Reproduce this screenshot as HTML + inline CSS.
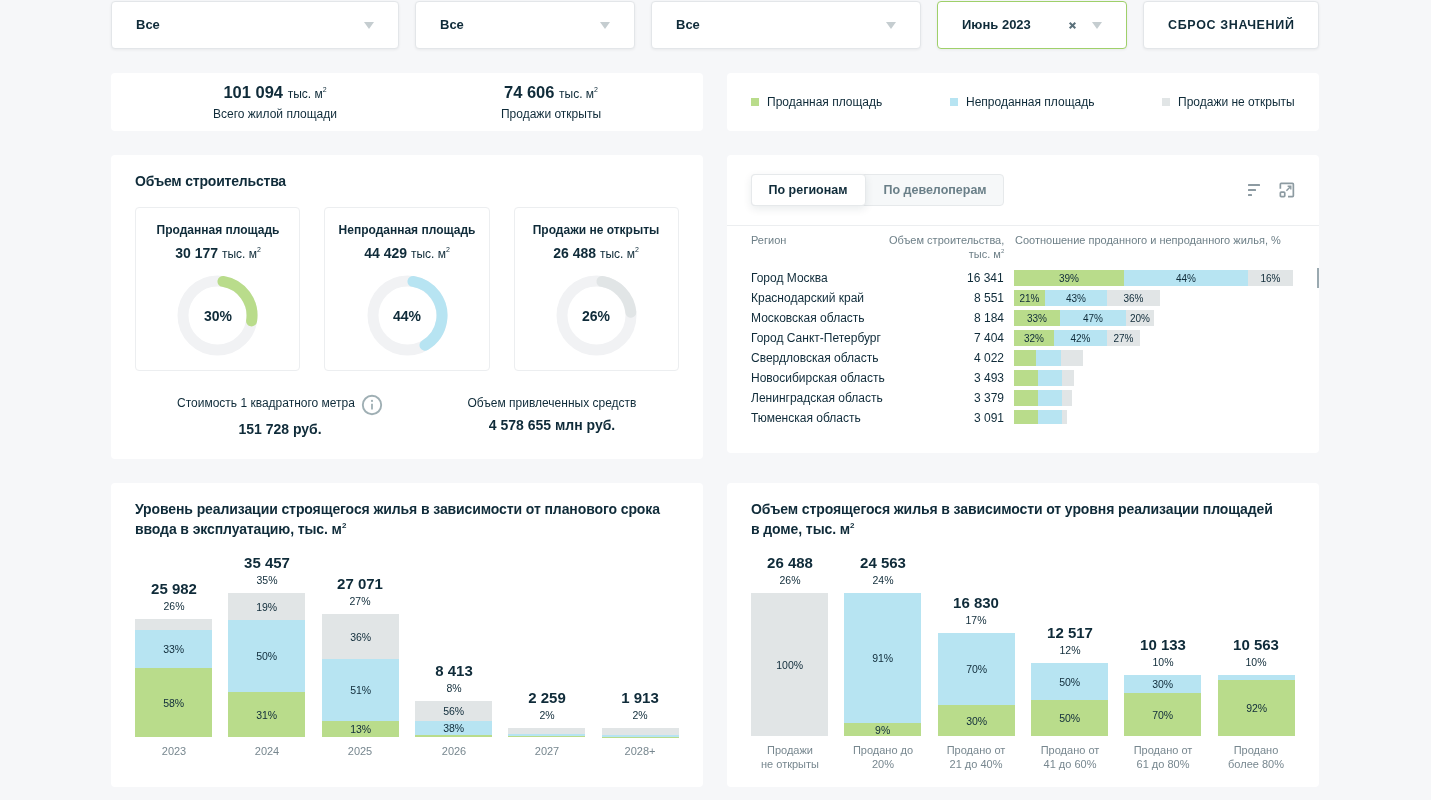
<!DOCTYPE html>
<html lang="ru">
<head>
<meta charset="utf-8">
<title>Dashboard</title>
<style>
*{box-sizing:border-box;margin:0;padding:0}
html,body{width:1431px;height:800px;overflow:hidden}
body{background:#f6f7f9;font-family:"Liberation Sans",sans-serif;color:#0f2b39;position:relative}
.abs{position:absolute}
.card{position:absolute;background:#fff;border-radius:4px}
.sel{position:absolute;top:1px;height:48px;background:#fff;border:1px solid #e3e6e9;border-radius:4px;box-shadow:0 1px 3px rgba(0,0,0,.06)}
.sel .t{will-change:transform;position:absolute;left:24px;top:15px;font-size:13px;font-weight:700;line-height:16px;white-space:nowrap}
.sel .ar{position:absolute;right:24px;top:20px;width:0;height:0;border-left:5px solid transparent;border-right:5px solid transparent;border-top:7px solid #c5cdd0}
.txt{position:absolute;white-space:nowrap;line-height:1;will-change:transform}
.c{transform:translateX(-50%);text-align:center}
.g{background:#b9dc8b}.b{background:#b7e4f2}.y{background:#e1e5e6}
.seg{will-change:transform;position:absolute;display:flex;align-items:center;justify-content:center;font-size:10.5px;color:#0f2b39;white-space:nowrap}
</style>
</head>
<body>

<!-- top filters -->
<div class="sel" style="left:111px;width:288px"><span class="t">Все</span><i class="ar"></i></div>
<div class="sel" style="left:415px;width:220px"><span class="t">Все</span><i class="ar"></i></div>
<div class="sel" style="left:651px;width:270px"><span class="t">Все</span><i class="ar"></i></div>
<div class="sel" style="left:937px;width:190px;border-color:#9fd06a"><span class="t">Июнь 2023</span><svg class="abs" style="left:130px;top:19px" width="9" height="9" viewBox="0 0 9 9"><path d="M1.7 1.7L7.3 7.3M7.3 1.7L1.7 7.3" stroke="#5b717b" stroke-width="2" fill="none"/></svg><i class="ar"></i></div>
<div class="sel" style="left:1143px;width:176px"><span class="t" style="letter-spacing:0.65px;font-size:12.5px">СБРОС ЗНАЧЕНИЙ</span></div>

<!-- stats card -->
<div class="card" style="left:111px;top:73px;width:592px;height:58px">
  <div class="txt c" id="s1" style="left:164px;top:11px;font-size:16.5px;font-weight:700">101 094 <span style="font-size:12px;font-weight:400">тыс. м<sup style="font-size:7px;vertical-align:6px;line-height:0">2</sup></span></div>
  <div class="txt c" id="s1l" style="left:164px;top:35px;font-size:12px">Всего жилой площади</div>
  <div class="txt c" id="s2" style="left:440px;top:11px;font-size:16.5px;font-weight:700">74 606 <span style="font-size:12px;font-weight:400">тыс. м<sup style="font-size:7px;vertical-align:6px;line-height:0">2</sup></span></div>
  <div class="txt c" id="s2l" style="left:440px;top:35px;font-size:12px">Продажи открыты</div>
</div>
<!-- legend card -->
<div class="card" style="left:727px;top:73px;width:592px;height:58px">
  <i class="abs g" style="left:24px;top:25px;width:8px;height:8px"></i><div class="txt" id="l1" style="left:40px;top:23px;font-size:12px">Проданная площадь</div>
  <i class="abs b" style="left:223px;top:25px;width:8px;height:8px"></i><div class="txt" id="l2" style="left:239px;top:23px;font-size:12px">Непроданная площадь</div>
  <i class="abs y" style="left:435px;top:25px;width:8px;height:8px"></i><div class="txt" id="l3" style="left:451px;top:23px;font-size:12px">Продажи не открыты</div>
</div>

<!-- volume card -->
<div class="card" style="left:111px;top:155px;width:592px;height:304px">
  <div class="txt" id="vt" style="left:24px;top:19px;font-size:14px;letter-spacing:-0.2px;font-weight:700">Объем строительства</div>
  <div class="abs" style="left:24px;top:52px;width:165.33px;height:164px;border:1px solid #eceef0;border-radius:4px">
    <div class="txt c" id="d1t" style="left:81.67px;top:16px;font-size:12px;font-weight:700">Проданная площадь</div>
    <div class="txt c" id="d1v" style="left:81.67px;top:38px;font-size:14px;font-weight:700">30 177 <span style="font-size:12px;font-weight:400">тыс. м<sup style="font-size:7px;vertical-align:6px;line-height:0">2</sup></span></div>
    <svg class="abs" style="left:41.3px;top:67.1px" width="81" height="81" viewBox="0 0 81 81"><circle cx="40.5" cy="40.5" r="34.5" fill="none" stroke="#f1f2f4" stroke-width="11"/><circle cx="40.5" cy="40.5" r="34.5" fill="none" stroke="#b9dc8b" stroke-width="11" stroke-linecap="round" stroke-dasharray="54.03 216.77" transform="rotate(-80.87 40.5 40.5)"/></svg>
    <div class="txt c" style="left:81.67px;top:101px;font-size:14px;font-weight:700">30%</div>
  </div>
  <div class="abs" style="left:213.33px;top:52px;width:165.33px;height:164px;border:1px solid #eceef0;border-radius:4px">
    <div class="txt c" id="d2t" style="left:81.67px;top:16px;font-size:12px;font-weight:700">Непроданная площадь</div>
    <div class="txt c" id="d2v" style="left:81.67px;top:38px;font-size:14px;font-weight:700">44 429 <span style="font-size:12px;font-weight:400">тыс. м<sup style="font-size:7px;vertical-align:6px;line-height:0">2</sup></span></div>
    <svg class="abs" style="left:41.3px;top:67.1px" width="81" height="81" viewBox="0 0 81 81"><circle cx="40.5" cy="40.5" r="34.5" fill="none" stroke="#f1f2f4" stroke-width="11"/><circle cx="40.5" cy="40.5" r="34.5" fill="none" stroke="#b7e4f2" stroke-width="11" stroke-linecap="round" stroke-dasharray="84.38 216.77" transform="rotate(-80.87 40.5 40.5)"/></svg>
    <div class="txt c" style="left:81.67px;top:101px;font-size:14px;font-weight:700">44%</div>
  </div>
  <div class="abs" style="left:402.67px;top:52px;width:165.33px;height:164px;border:1px solid #eceef0;border-radius:4px">
    <div class="txt c" id="d3t" style="left:81.67px;top:16px;font-size:12px;font-weight:700">Продажи не открыты</div>
    <div class="txt c" id="d3v" style="left:81.67px;top:38px;font-size:14px;font-weight:700">26 488 <span style="font-size:12px;font-weight:400">тыс. м<sup style="font-size:7px;vertical-align:6px;line-height:0">2</sup></span></div>
    <svg class="abs" style="left:41.3px;top:67.1px" width="81" height="81" viewBox="0 0 81 81"><circle cx="40.5" cy="40.5" r="34.5" fill="none" stroke="#f1f2f4" stroke-width="11"/><circle cx="40.5" cy="40.5" r="34.5" fill="none" stroke="#e1e5e6" stroke-width="11" stroke-linecap="round" stroke-dasharray="45.36 216.77" transform="rotate(-80.87 40.5 40.5)"/></svg>
    <div class="txt c" style="left:81.67px;top:101px;font-size:14px;font-weight:700">26%</div>
  </div>
  <div class="txt" id="c1" style="left:66px;top:242px;font-size:12px">Стоимость 1 квадратного метра</div>
  <svg class="abs" style="left:250px;top:239px" width="22" height="22" viewBox="0 0 22 22"><circle cx="11" cy="11" r="9.2" fill="none" stroke="#9fafb4" stroke-width="1.9"/><circle cx="11" cy="6.9" r="1.1" fill="#9fafb4"/><path d="M11 9.7V15.6" stroke="#9fafb4" stroke-width="1.8"/></svg>
  <div class="txt c" id="c1v" style="left:169px;top:267px;font-size:14px;font-weight:700">151 728 руб.</div>
  <div class="txt c" id="c2" style="left:441px;top:242px;font-size:12px">Объем привлеченных средств</div>
  <div class="txt c" id="c2v" style="left:441px;top:263px;font-size:14px;font-weight:700">4 578 655 млн руб.</div>
</div>
<!-- regions card -->
<div class="card" style="left:727px;top:155px;width:592px;height:298px">
  <div class="abs" style="left:24px;top:19px;width:253px;height:32px;background:#f6f8f9;border:1px solid #e6e9eb;border-radius:4px"></div>
  <div class="abs" style="left:24px;top:19px;width:115px;height:32px;background:#fff;border:1px solid #e6e9eb;border-radius:4px;box-shadow:0 3px 8px rgba(16,41,58,.09)"></div>
  <div class="txt c" id="tb1" style="left:81px;top:29px;font-size:12.5px;font-weight:700">По регионам</div>
  <div class="txt c" id="tb2" style="left:208px;top:29px;font-size:12.5px;font-weight:700;color:#6a7f88">По девелоперам</div>
  <svg class="abs" style="left:521px;top:29px" width="12" height="12" viewBox="0 0 12 12"><rect x="0" y="0" width="12" height="2" rx="0.5" fill="#8d9ba2"/><rect x="0" y="5" width="8" height="2" rx="0.5" fill="#8d9ba2"/><rect x="0" y="10" width="4" height="2" rx="0.5" fill="#8d9ba2"/></svg>
  <svg class="abs" style="left:552px;top:27px" width="16" height="16" viewBox="0 0 16 16" fill="none" stroke="#8d9ba2" stroke-width="1.7"><path d="M1.35 6.7V2.3Q1.35 1.45 2.2 1.45H13.5Q14.35 1.45 14.35 2.3V13.7Q14.35 14.55 13.5 14.55H9"/><rect x="1.35" y="10.2" width="4.4" height="4.4" rx="0.8"/><path d="M7.4 8.7L11.4 4.7" stroke-width="1.5"/><path d="M8.6 4.3H11.8V7.5" stroke-width="1.4"/></svg>
  <div class="abs" style="left:0;top:70px;width:592px;height:1px;background:#eceef0"></div>
  <div class="txt" id="h1" style="left:24px;top:80px;font-size:11px;color:#6d7f87">Регион</div>
  <div class="txt" id="h2" style="right:315px;top:78px;font-size:11px;color:#6d7f87;text-align:right;line-height:14px">Объем строительства,<br>тыс. м<sup style="font-size:6px;vertical-align:5px;line-height:0">2</sup></div>
  <div class="txt" id="h3" style="left:288px;top:80px;font-size:11px;color:#6d7f87">Соотношение проданного и непроданного жилья, %</div>
  <div class="abs" style="left:590px;top:113px;width:2px;height:20px;background:#9aa9b0"></div>

  <div class="txt" id="r0" style="left:24px;top:117px;font-size:12px">Город Москва</div><div class="txt" style="right:315px;top:117px;font-size:12px">16 341</div>
  <div class="seg g" style="left:287px;top:115px;width:110px;height:16px;font-size:10px">39%</div>
  <div class="seg b" style="left:397px;top:115px;width:124px;height:16px;font-size:10px">44%</div>
  <div class="seg y" style="left:521px;top:115px;width:45px;height:16px;font-size:10px">16%</div>
  <div class="txt" id="r1" style="left:24px;top:137px;font-size:12px">Краснодарский край</div><div class="txt" style="right:315px;top:137px;font-size:12px">8 551</div>
  <div class="seg g" style="left:287px;top:135px;width:31px;height:16px;font-size:10px">21%</div>
  <div class="seg b" style="left:318px;top:135px;width:62px;height:16px;font-size:10px">43%</div>
  <div class="seg y" style="left:380px;top:135px;width:53px;height:16px;font-size:10px">36%</div>
  <div class="txt" id="r2" style="left:24px;top:157px;font-size:12px">Московская область</div><div class="txt" style="right:315px;top:157px;font-size:12px">8 184</div>
  <div class="seg g" style="left:287px;top:155px;width:46px;height:16px;font-size:10px">33%</div>
  <div class="seg b" style="left:333px;top:155px;width:66px;height:16px;font-size:10px">47%</div>
  <div class="seg y" style="left:399px;top:155px;width:28px;height:16px;font-size:10px">20%</div>
  <div class="txt" id="r3" style="left:24px;top:177px;font-size:12px">Город Санкт-Петербург</div><div class="txt" style="right:315px;top:177px;font-size:12px">7 404</div>
  <div class="seg g" style="left:287px;top:175px;width:40px;height:16px;font-size:10px">32%</div>
  <div class="seg b" style="left:327px;top:175px;width:53px;height:16px;font-size:10px">42%</div>
  <div class="seg y" style="left:380px;top:175px;width:33px;height:16px;font-size:10px">27%</div>
  <div class="txt" id="r4" style="left:24px;top:197px;font-size:12px">Свердловская область</div><div class="txt" style="right:315px;top:197px;font-size:12px">4 022</div>
  <div class="seg g" style="left:287px;top:195px;width:22px;height:16px;font-size:10px"></div>
  <div class="seg b" style="left:309px;top:195px;width:25px;height:16px;font-size:10px"></div>
  <div class="seg y" style="left:334px;top:195px;width:22px;height:16px;font-size:10px"></div>
  <div class="txt" id="r5" style="left:24px;top:217px;font-size:12px">Новосибирская область</div><div class="txt" style="right:315px;top:217px;font-size:12px">3 493</div>
  <div class="seg g" style="left:287px;top:215px;width:24px;height:16px;font-size:10px"></div>
  <div class="seg b" style="left:311px;top:215px;width:24px;height:16px;font-size:10px"></div>
  <div class="seg y" style="left:335px;top:215px;width:12px;height:16px;font-size:10px"></div>
  <div class="txt" id="r6" style="left:24px;top:237px;font-size:12px">Ленинградская область</div><div class="txt" style="right:315px;top:237px;font-size:12px">3 379</div>
  <div class="seg g" style="left:287px;top:235px;width:24px;height:16px;font-size:10px"></div>
  <div class="seg b" style="left:311px;top:235px;width:24px;height:16px;font-size:10px"></div>
  <div class="seg y" style="left:335px;top:235px;width:10px;height:16px;font-size:10px"></div>
  <div class="txt" id="r7" style="left:24px;top:257px;font-size:12px">Тюменская область</div><div class="txt" style="right:315px;top:257px;font-size:12px">3 091</div>
  <div class="seg g" style="left:287px;top:255px;width:24px;height:14px;font-size:10px"></div>
  <div class="seg b" style="left:311px;top:255px;width:24px;height:14px;font-size:10px"></div>
  <div class="seg y" style="left:335px;top:255px;width:5px;height:14px;font-size:10px"></div>
</div>

<!-- bottom left -->
<div class="card" style="left:111px;top:483px;width:592px;height:304px">
  <div class="txt" id="blt" style="left:24px;top:16px;font-size:14px;font-weight:700;line-height:20px;letter-spacing:-0.1px">Уровень реализации строящегося жилья в зависимости от планового срока<br>ввода в эксплуатацию, тыс. м<sup style="font-size:8px;vertical-align:6px;line-height:0">2</sup></div>
  <div class="txt c" style="left:62.7px;top:98px;font-size:15px;font-weight:700">25 982</div><div class="txt c" style="left:62.7px;top:118px;font-size:10.5px">26%</div>
  <div class="seg y" style="left:24.00px;top:136px;width:77.33px;height:11px"></div>
  <div class="seg b" style="left:24.00px;top:147px;width:77.33px;height:38px">33%</div>
  <div class="seg g" style="left:24.00px;top:185px;width:77.33px;height:69px">58%</div>
  <div class="txt c" style="left:62.7px;top:260.5px;font-size:11px;line-height:14.4px;color:#77878f">2023</div>
  <div class="txt c" style="left:156.0px;top:72px;font-size:15px;font-weight:700">35 457</div><div class="txt c" style="left:156.0px;top:92px;font-size:10.5px">35%</div>
  <div class="seg y" style="left:117.33px;top:110px;width:77.33px;height:27px">19%</div>
  <div class="seg b" style="left:117.33px;top:137px;width:77.33px;height:72px">50%</div>
  <div class="seg g" style="left:117.33px;top:209px;width:77.33px;height:45px">31%</div>
  <div class="txt c" style="left:156.0px;top:260.5px;font-size:11px;line-height:14.4px;color:#77878f">2024</div>
  <div class="txt c" style="left:249.3px;top:93px;font-size:15px;font-weight:700">27 071</div><div class="txt c" style="left:249.3px;top:113px;font-size:10.5px">27%</div>
  <div class="seg y" style="left:210.67px;top:131px;width:77.33px;height:45px">36%</div>
  <div class="seg b" style="left:210.67px;top:176px;width:77.33px;height:62px">51%</div>
  <div class="seg g" style="left:210.67px;top:238px;width:77.33px;height:16px">13%</div>
  <div class="txt c" style="left:249.3px;top:260.5px;font-size:11px;line-height:14.4px;color:#77878f">2025</div>
  <div class="txt c" style="left:342.7px;top:180px;font-size:15px;font-weight:700">8 413</div><div class="txt c" style="left:342.7px;top:200px;font-size:10.5px">8%</div>
  <div class="seg y" style="left:304.00px;top:218px;width:77.33px;height:20px">56%</div>
  <div class="seg b" style="left:304.00px;top:238px;width:77.33px;height:14px">38%</div>
  <div class="seg g" style="left:304.00px;top:252px;width:77.33px;height:2px"></div>
  <div class="txt c" style="left:342.7px;top:260.5px;font-size:11px;line-height:14.4px;color:#77878f">2026</div>
  <div class="txt c" style="left:436.0px;top:207px;font-size:15px;font-weight:700">2 259</div><div class="txt c" style="left:436.0px;top:227px;font-size:10.5px">2%</div>
  <div class="seg y" style="left:397.33px;top:245px;width:77.33px;height:6px"></div>
  <div class="seg b" style="left:397.33px;top:251px;width:77.33px;height:2px"></div>
  <div class="seg g" style="left:397.33px;top:253px;width:77.33px;height:1px"></div>
  <div class="txt c" style="left:436.0px;top:260.5px;font-size:11px;line-height:14.4px;color:#77878f">2027</div>
  <div class="txt c" style="left:529.3px;top:207px;font-size:15px;font-weight:700">1 913</div><div class="txt c" style="left:529.3px;top:227px;font-size:10.5px">2%</div>
  <div class="seg y" style="left:490.66px;top:245px;width:77.33px;height:7px"></div>
  <div class="seg b" style="left:490.66px;top:252px;width:77.33px;height:2px"></div>
  <div class="seg g" style="left:490.66px;top:254px;width:77.33px;height:1px"></div>
  <div class="txt c" style="left:529.3px;top:260.5px;font-size:11px;line-height:14.4px;color:#77878f">2028+</div>
</div>
<!-- bottom right -->
<div class="card" style="left:727px;top:483px;width:592px;height:304px">
  <div class="txt" id="brt" style="left:24px;top:16px;font-size:14px;font-weight:700;line-height:20px;letter-spacing:-0.1px">Объем строящегося жилья в зависимости от уровня реализации площадей<br>в доме, тыс. м<sup style="font-size:8px;vertical-align:6px;line-height:0">2</sup></div>
  <div class="txt c" style="left:62.7px;top:72px;font-size:15px;font-weight:700">26 488</div><div class="txt c" style="left:62.7px;top:92px;font-size:10.5px">26%</div>
  <div class="seg y" style="left:24.00px;top:110px;width:77.33px;height:143px">100%</div>
  <div class="txt c" style="left:62.7px;top:259.5px;font-size:11px;line-height:14.4px;color:#77878f">Продажи<br>не открыты</div>
  <div class="txt c" style="left:156.0px;top:72px;font-size:15px;font-weight:700">24 563</div><div class="txt c" style="left:156.0px;top:92px;font-size:10.5px">24%</div>
  <div class="seg b" style="left:117.33px;top:110px;width:77.33px;height:130px">91%</div>
  <div class="seg g" style="left:117.33px;top:240px;width:77.33px;height:13px">9%</div>
  <div class="txt c" style="left:156.0px;top:259.5px;font-size:11px;line-height:14.4px;color:#77878f">Продано до<br>20%</div>
  <div class="txt c" style="left:249.3px;top:112px;font-size:15px;font-weight:700">16 830</div><div class="txt c" style="left:249.3px;top:132px;font-size:10.5px">17%</div>
  <div class="seg b" style="left:210.67px;top:150px;width:77.33px;height:72px">70%</div>
  <div class="seg g" style="left:210.67px;top:222px;width:77.33px;height:31px">30%</div>
  <div class="txt c" style="left:249.3px;top:259.5px;font-size:11px;line-height:14.4px;color:#77878f">Продано от<br>21 до 40%</div>
  <div class="txt c" style="left:342.7px;top:142px;font-size:15px;font-weight:700">12 517</div><div class="txt c" style="left:342.7px;top:162px;font-size:10.5px">12%</div>
  <div class="seg b" style="left:304.00px;top:180px;width:77.33px;height:37px">50%</div>
  <div class="seg g" style="left:304.00px;top:217px;width:77.33px;height:36px">50%</div>
  <div class="txt c" style="left:342.7px;top:259.5px;font-size:11px;line-height:14.4px;color:#77878f">Продано от<br>41 до 60%</div>
  <div class="txt c" style="left:436.0px;top:154px;font-size:15px;font-weight:700">10 133</div><div class="txt c" style="left:436.0px;top:174px;font-size:10.5px">10%</div>
  <div class="seg b" style="left:397.33px;top:192px;width:77.33px;height:18px">30%</div>
  <div class="seg g" style="left:397.33px;top:210px;width:77.33px;height:43px">70%</div>
  <div class="txt c" style="left:436.0px;top:259.5px;font-size:11px;line-height:14.4px;color:#77878f">Продано от<br>61 до 80%</div>
  <div class="txt c" style="left:529.3px;top:154px;font-size:15px;font-weight:700">10 563</div><div class="txt c" style="left:529.3px;top:174px;font-size:10.5px">10%</div>
  <div class="seg b" style="left:490.66px;top:192px;width:77.33px;height:5px"></div>
  <div class="seg g" style="left:490.66px;top:197px;width:77.33px;height:56px">92%</div>
  <div class="txt c" style="left:529.3px;top:259.5px;font-size:11px;line-height:14.4px;color:#77878f">Продано<br>более 80%</div>
</div>

</body>
</html>
